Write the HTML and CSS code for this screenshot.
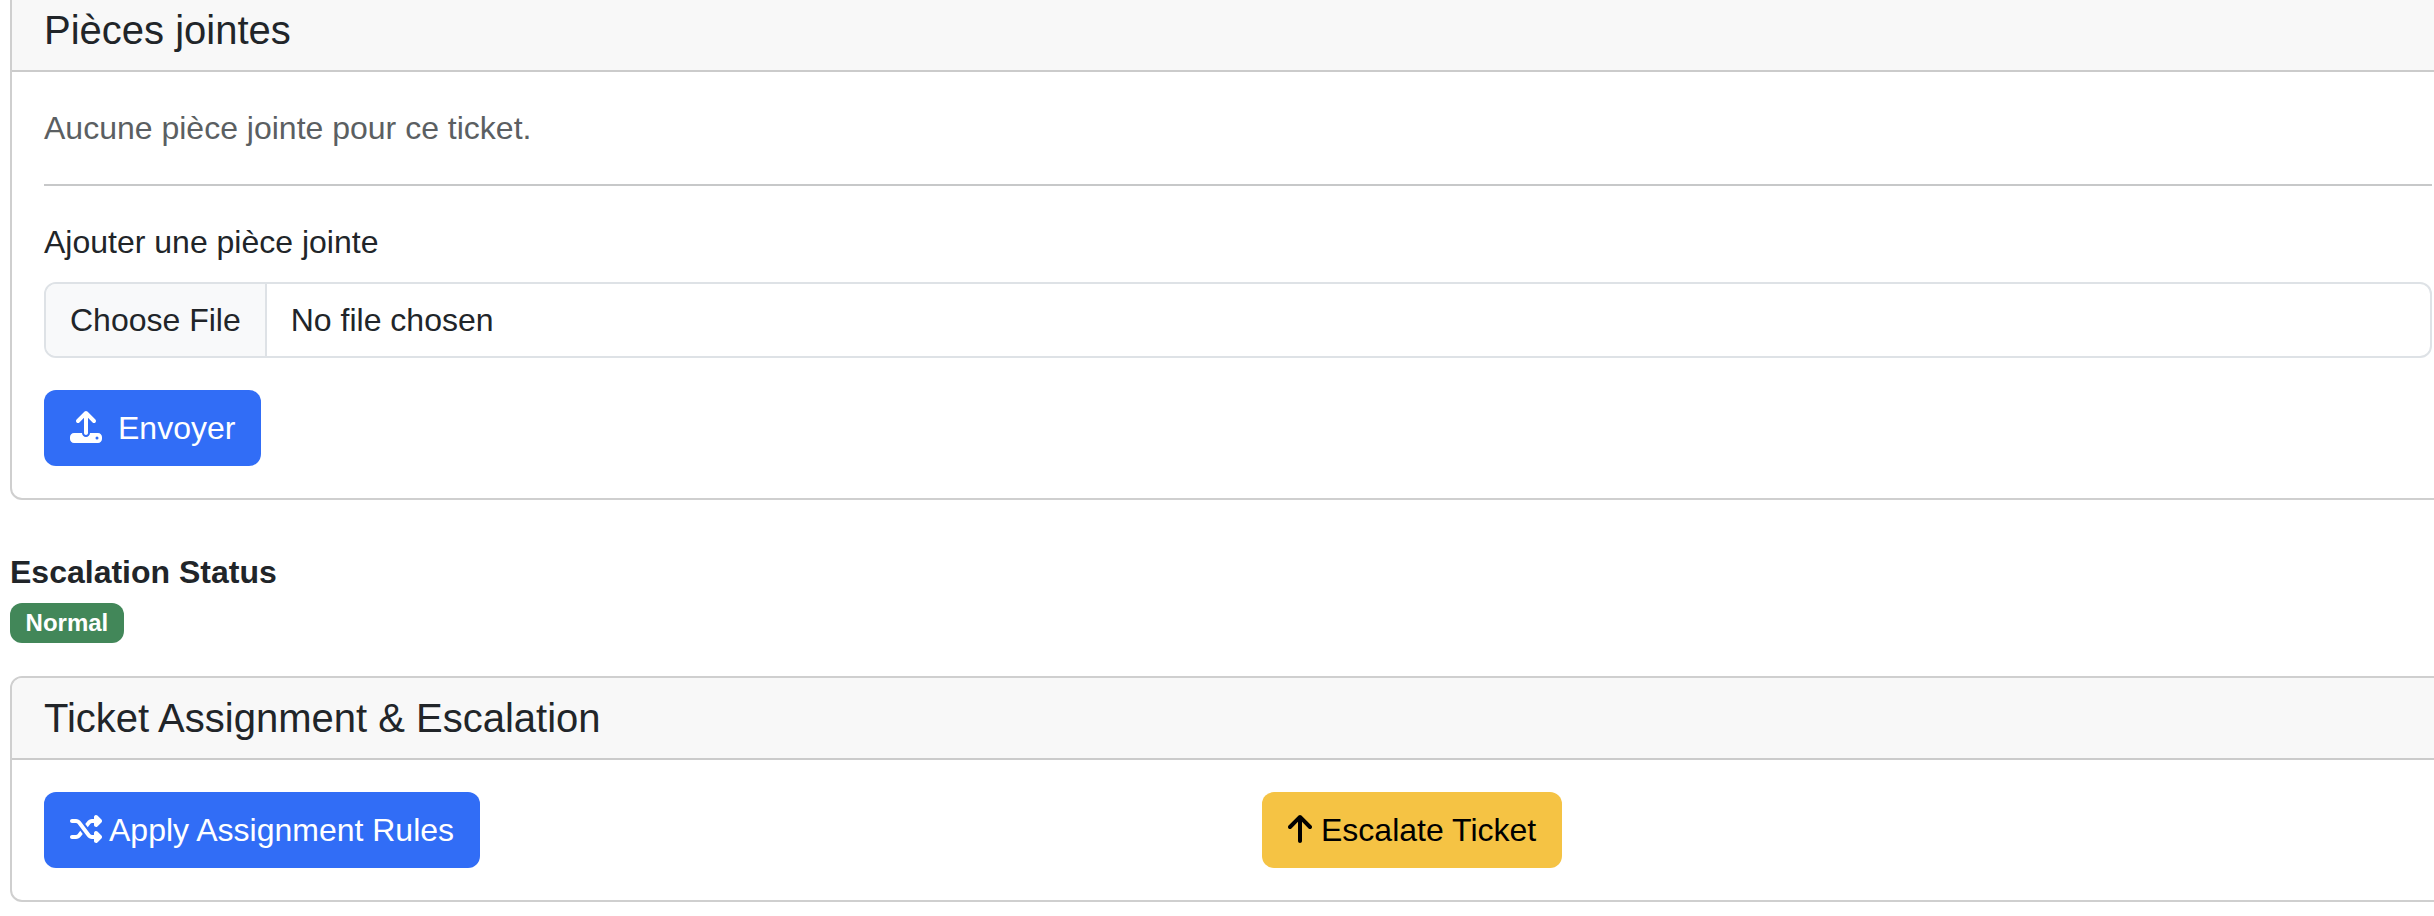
FILE: index.html
```html
<!DOCTYPE html>
<html lang="fr">
<head>
<meta charset="utf-8">
<title>Ticket</title>
<link rel="stylesheet" href="styles.css">
</head>
<body>
<main class="page">
  <section class="card attachments">
    <h5 class="card-header">Pièces jointes</h5>
    <div class="card-body">
      <p class="muted">Aucune pièce jointe pour ce ticket.</p>
      <hr class="divider">
      <label class="form-label" for="file">Ajouter une pièce jointe</label>
      <input class="form-control" type="file" id="file">
      <button class="btn btn-primary btn-send" type="button"><svg class="icon" viewBox="0 0 512 512"><path d="M288 109.3V352c0 17.7-14.3 32-32 32s-32-14.3-32-32V109.3l-73.4 73.4c-12.5 12.5-32.8 12.5-45.3 0s-12.5-32.8 0-45.3l128-128c12.5-12.5 32.8-12.5 45.3 0l128 128c12.5 12.5 12.5 32.8 0 45.3s-32.8 12.5-45.3 0L288 109.3zM64 352H192c0 35.3 28.7 64 64 64s64-28.7 64-64H448c35.3 0 64 28.7 64 64v32c0 35.3-28.7 64-64 64H64c-35.3 0-64-28.7-64-64V416c0-35.3 28.7-64 64-64zM432 456a24 24 0 1 0 0-48 24 24 0 1 0 0 48z"/></svg><span>Envoyer</span></button>
    </div>
  </section>

  <section class="status">
    <strong class="status-title">Escalation Status</strong>
    <span class="badge">Normal</span>
  </section>

  <section class="card">
    <h5 class="card-header">Ticket Assignment &amp; Escalation</h5>
    <div class="card-body row">
      <div class="col">
        <button class="btn btn-primary" type="button"><svg class="icon" viewBox="0 0 512 512"><path d="M403.8 34.4c12-5 25.7-2.2 34.9 6.9l64 64c6 6 9.4 14.1 9.4 22.6s-3.4 16.6-9.4 22.6l-64 64c-9.2 9.2-22.9 11.9-34.9 6.9s-19.8-16.6-19.8-29.6V160H352c-10.1 0-19.6 4.7-25.6 12.8L284 229.3 244 176l31.2-41.6C293.3 110.2 321.8 96 352 96h32V64c0-12.9 7.8-24.6 19.8-29.6zM164 282.7L204 336l-31.2 41.6C154.7 401.8 126.2 416 96 416H32c-17.7 0-32-14.3-32-32s14.3-32 32-32H96c10.1 0 19.6-4.7 25.6-12.8L164 282.7zm274.6 188c-9.2 9.2-22.9 11.9-34.9 6.9s-19.8-16.6-19.8-29.6V416H352c-30.2 0-58.7-14.2-76.8-38.4L121.6 172.8c-6-8.1-15.5-12.8-25.6-12.8H32c-17.7 0-32-14.3-32-32s14.3-32 32-32H96c30.2 0 58.7 14.2 76.8 38.4L326.4 339.2c6 8.1 15.5 12.8 25.6 12.8h32V320c0-12.9 7.8-24.6 19.8-29.6s25.7-2.2 34.9 6.9l64 64c6 6 9.4 14.1 9.4 22.6s-3.4 16.6-9.4 22.6l-64 64z"/></svg><span>Apply Assignment Rules</span></button>
      </div>
      <div class="col">
        <button class="btn btn-warning" type="button"><svg class="icon icon-narrow" viewBox="0 0 384 512"><path d="M214.6 41.4c-12.5-12.5-32.8-12.5-45.3 0l-160 160c-12.5 12.5-12.5 32.8 0 45.3s32.8 12.5 45.3 0L160 141.2V448c0 17.7 14.3 32 32 32s32-14.3 32-32V141.2L329.4 246.6c12.5 12.5 32.8 12.5 45.3 0s12.5-32.8 0-45.3l-160-160z"/></svg><span>Escalate Ticket</span></button>
      </div>
    </div>
  </section>
</main>
</body>
</html>
```
FILE: styles.css
```css
* { box-sizing: border-box; }

html, body {
  margin: 0;
  height: 100%;
  overflow: hidden;
}

body {
  background: #fff;
  color: #212529;
  font: 32px/48px "Liberation Sans", Arial, sans-serif;
}

.page {
  width: 2456px;
  margin: -12px 0 0 10px;
}

.card {
  border: 2px solid #cfcfcf;
  border-radius: 12px;
  overflow: hidden;
}

.card-header {
  margin: 0;
  padding: 16px 32px;
  border-bottom: 2px solid #cbcbcb;
  background: #f8f8f8;
  font-size: 40px;
  font-weight: 400;
  line-height: 48px;
}

.card-body { padding: 32px; }

.muted {
  margin: 0 0 32px;
  color: #5b5f62;
}

.divider {
  margin: 0 0 32px;
  border: 0;
  border-top: 2px solid #c7c8c9;
}

.form-label {
  display: block;
  margin-bottom: 16px;
}

.form-control {
  display: block;
  width: 100%;
  height: 76px;
  margin: 0 0 32px;
  padding: 12px 24px;
  overflow: hidden;
  border: 2px solid #dee2e6;
  border-radius: 12px;
  color: #212529;
  font: inherit;
}

.form-control::file-selector-button {
  margin: -12px 24px -12px -24px;
  padding: 12px 24px;
  border: 0 solid #dee2e6;
  border-right-width: 2px;
  border-radius: 0;
  background: #f8f9fa;
  color: #212529;
  font: inherit;
}

.btn {
  display: flex;
  align-items: center;
  gap: 7px;
  height: 76px;
  padding: 0 26px;
  border: 0;
  border-radius: 12px;
  font: inherit;
  white-space: nowrap;
}

.btn-primary { background: #316df6; color: #fff; }
.btn-warning { gap: 9px; background: #f5c344; color: #000; }
.btn-send { gap: 16px; }

.icon {
  width: 32px;
  height: 32px;
  margin-top: -2px;
  fill: currentColor;
}

.icon-narrow { width: 24px; }

.status {
  display: flex;
  flex-direction: column;
  align-items: flex-start;
  gap: 7px;
  padding: 48px 0 33px;
}

.badge {
  height: 40px;
  padding: 8px 15.6px;
  border-radius: 12px;
  background: #428759;
  color: #fff;
  font-size: 24px;
  font-weight: 700;
  line-height: 24px;
}

.row {
  display: grid;
  grid-template-columns: 1fr 1fr;
  column-gap: 48px;
}
```
